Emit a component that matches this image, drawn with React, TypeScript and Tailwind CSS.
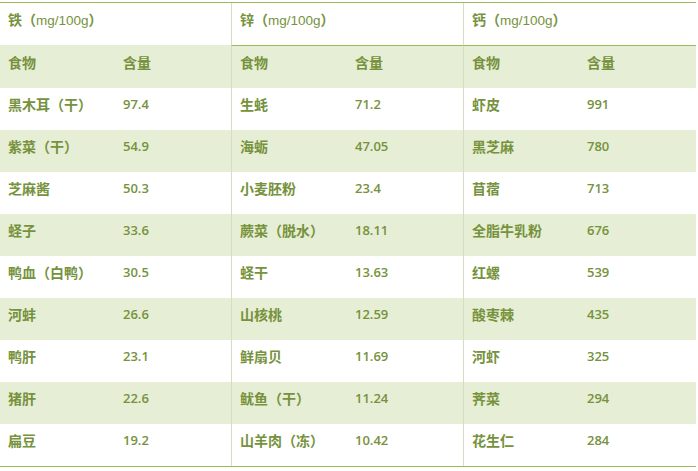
import React from "react";

type Item = [string, string];

const groups: { title: string; items: Item[] }[] = [
  {
    title: "铁",
    items: [
      ["黑木耳（干）", "97.4"],
      ["紫菜（干）", "54.9"],
      ["芝麻酱", "50.3"],
      ["蛏子", "33.6"],
      ["鸭血（白鸭）", "30.5"],
      ["河蚌", "26.6"],
      ["鸭肝", "23.1"],
      ["猪肝", "22.6"],
      ["扁豆", "19.2"],
    ],
  },
  {
    title: "锌",
    items: [
      ["生蚝", "71.2"],
      ["海蛎", "47.05"],
      ["小麦胚粉", "23.4"],
      ["蕨菜（脱水）", "18.11"],
      ["蛏干", "13.63"],
      ["山核桃", "12.59"],
      ["鲜扇贝", "11.69"],
      ["鱿鱼（干）", "11.24"],
      ["山羊肉（冻）", "10.42"],
    ],
  },
  {
    title: "钙",
    items: [
      ["虾皮", "991"],
      ["黑芝麻", "780"],
      ["苜蓿", "713"],
      ["全脂牛乳粉", "676"],
      ["红螺", "539"],
      ["酸枣棘", "435"],
      ["河虾", "325"],
      ["荠菜", "294"],
      ["花生仁", "284"],
    ],
  },
];

const cjk = "font-['Noto_Sans_CJK_SC',sans-serif] font-bold text-[14px] leading-[20px]";
const num = "font-['Open_Sans',sans-serif] font-semibold text-[13px] leading-[20px]";
const rowGrid = "grid grid-cols-[115px_116px_116px_116px_116px_117px] h-[42px]";

function Cell({ children, first, divider }: { children: React.ReactNode; first?: boolean; divider?: boolean }) {
  return (
    <div className={`pl-2 pt-[6px] ${divider ? "border-l border-[#d6ddc3]" : ""} ${first ? cjk : ""}`}>
      {children}
    </div>
  );
}

export default function App() {
  const rows: { label: boolean; cells: Item[] }[] = [
    { label: true, cells: [["食物", "含量"], ["食物", "含量"], ["食物", "含量"]] },
    ...Array.from({ length: 9 }, (_, i) => ({ label: false, cells: groups.map((g) => g.items[i]) })),
  ];

  return (
    <div className="bg-white w-[698px] h-[471px] pt-[2px]">
      <div className="w-[696px] border-y border-[#9bbb59] text-[#76923c]">
        <div className="grid grid-cols-[231px_232px_233px] h-[43px]">
          {groups.map((g, i) => (
            <div
              key={g.title}
              className={`pl-2 pt-[6px] border-b ${i === 0 ? "border-[#e6eed5]" : "border-[#9bbb59] border-l border-l-[#d6ddc3]"} ${cjk}`}
            >
              {g.title}（
              <span className="font-['Liberation_Sans',sans-serif] font-normal text-[13.5px]">mg/100g</span>）
            </div>
          ))}
        </div>
        {rows.map((r, ri) => (
          <div key={ri} className={`${rowGrid} ${ri % 2 === 0 ? "bg-[#e6eed5]" : "bg-white"}`}>
            {r.cells.map(([name, value], ci) => (
              <React.Fragment key={ci}>
                <Cell first divider={ci > 0}>
                  {name}
                </Cell>
                <div className={`pl-2 pt-[6px] ${r.label ? cjk : num}`}>{value}</div>
              </React.Fragment>
            ))}
          </div>
        ))}
      </div>
    </div>
  );
}
